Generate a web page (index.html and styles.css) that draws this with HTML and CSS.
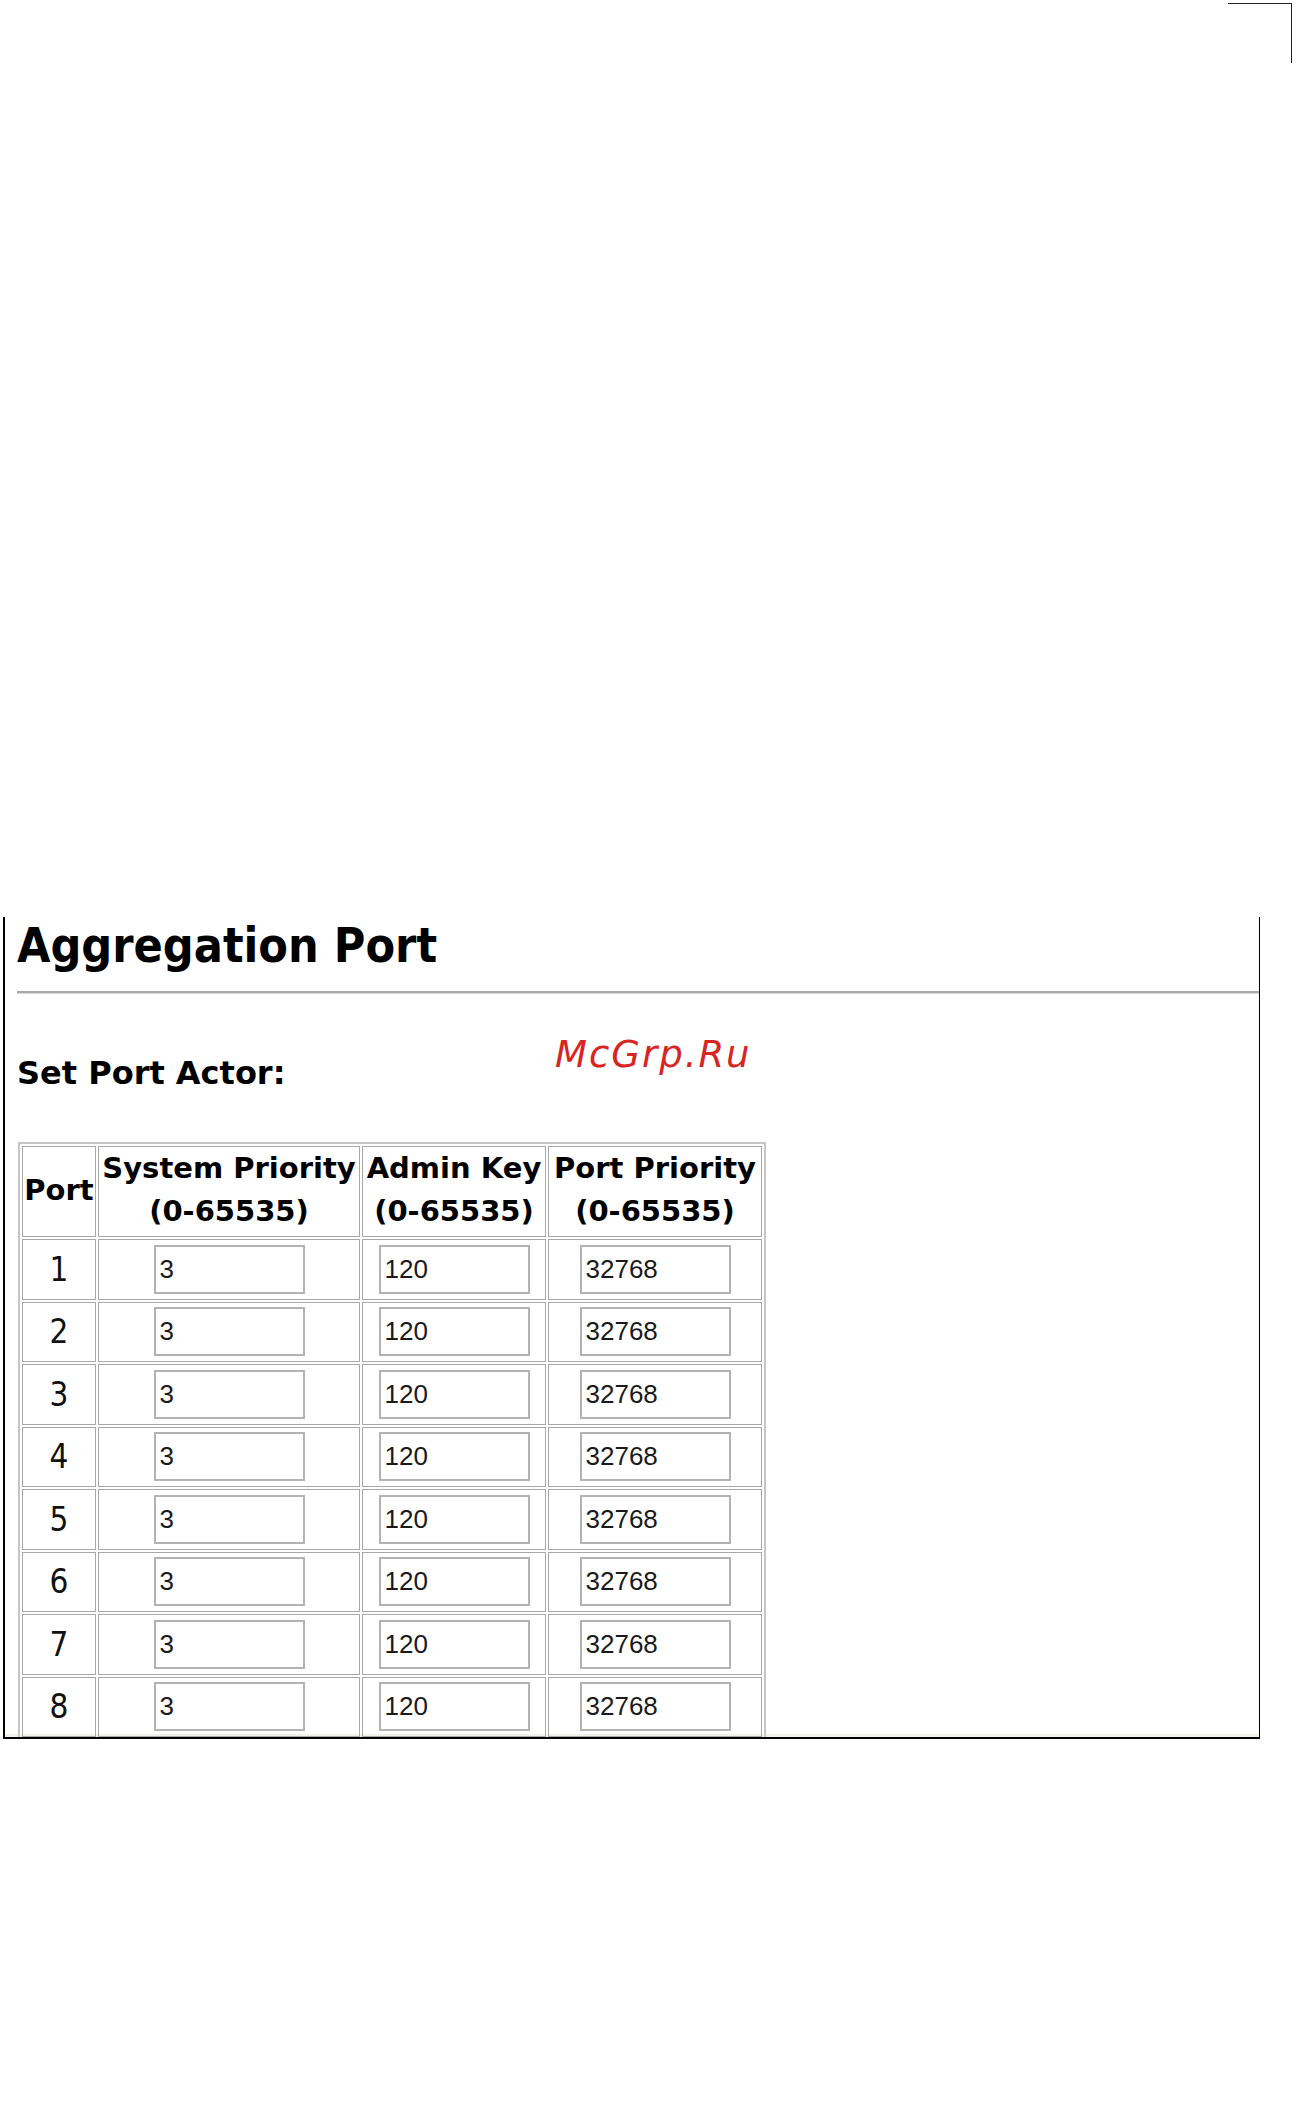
FILE: index.html
```html
<!DOCTYPE html>
<html>
<head>
<meta charset="utf-8">
<title>Aggregation Port</title>
<link rel="stylesheet" href="styles.css">
</head>
<body>
<div class="page">
  <div class="crop-row"><div class="crop-mark"></div></div>
  <div class="frame">
    <h1 class="title">Aggregation Port</h1>
    <div class="rule"></div>
    <h2 class="subtitle">Set Port Actor:</h2>
    <div class="watermark">McGrp.Ru</div>
    <table class="actor">
      <thead>
        <tr>
          <th class="c-port">Port</th>
          <th class="c-sys">System Priority<br>(0-65535)</th>
          <th class="c-key">Admin Key<br>(0-65535)</th>
          <th class="c-pp">Port Priority<br>(0-65535)</th>
        </tr>
      </thead>
      <tbody>
        <tr><td class="num">1</td><td><input class="field" type="text" value="3"></td><td><input class="field" type="text" value="120"></td><td><input class="field" type="text" value="32768"></td></tr>
        <tr><td class="num">2</td><td><input class="field" type="text" value="3"></td><td><input class="field" type="text" value="120"></td><td><input class="field" type="text" value="32768"></td></tr>
        <tr><td class="num">3</td><td><input class="field" type="text" value="3"></td><td><input class="field" type="text" value="120"></td><td><input class="field" type="text" value="32768"></td></tr>
        <tr><td class="num">4</td><td><input class="field" type="text" value="3"></td><td><input class="field" type="text" value="120"></td><td><input class="field" type="text" value="32768"></td></tr>
        <tr><td class="num">5</td><td><input class="field" type="text" value="3"></td><td><input class="field" type="text" value="120"></td><td><input class="field" type="text" value="32768"></td></tr>
        <tr><td class="num">6</td><td><input class="field" type="text" value="3"></td><td><input class="field" type="text" value="120"></td><td><input class="field" type="text" value="32768"></td></tr>
        <tr><td class="num">7</td><td><input class="field" type="text" value="3"></td><td><input class="field" type="text" value="120"></td><td><input class="field" type="text" value="32768"></td></tr>
        <tr><td class="num">8</td><td><input class="field" type="text" value="3"></td><td><input class="field" type="text" value="120"></td><td><input class="field" type="text" value="32768"></td></tr>
      </tbody>
    </table>
  </div>
</div>
</body>
</html>
```
FILE: styles.css
```css
html, body {
  margin: 0;
  padding: 0;
  background: #ffffff;
}

body {
  font-family: "DejaVu Sans", Verdana, sans-serif;
  color: #000;
}

.page {
  width: 1296px;
  height: 2107px;
}

.crop-row {
  display: flex;
  justify-content: flex-end;
  padding: 3px 4px 0 0;
}

.crop-mark {
  width: 64px;
  height: 60px;
  box-sizing: border-box;
  border-top: 1px solid #222;
  border-right: 1px solid #222;
}

.frame {
  position: relative;
  margin: 854px 0 0 3px;
  width: 1257px;
  height: 822px;
  box-sizing: border-box;
  border-left: 2px solid #000;
  border-right: 1px solid #000;
  border-bottom: 2px solid #000;
  padding-left: 12px;
  overflow: hidden;
  box-shadow: inset 0 -3px 0 #f2f1e9;
}

.title {
  margin: 0;
  font-family: "DejaVu Sans Condensed", "DejaVu Sans", sans-serif;
  font-stretch: condensed;
  font-weight: bold;
  font-size: 48px;
  line-height: 57px;
  color: #000;
}

.rule {
  margin-top: 17px;
  height: 0;
  border-top: 2px solid #a9a9a9;
  border-bottom: 1px solid #d9d9d9;
}

.subtitle {
  margin: 59px 0 0 0;
  font-family: "DejaVu Sans", sans-serif;
  font-weight: bold;
  font-size: 32px;
  line-height: 40px;
  color: #000;
}

.watermark {
  position: absolute;
  left: 550px;
  top: 116px;
  font-family: "DejaVu Sans", sans-serif;
  font-style: italic;
  font-size: 37px;
  line-height: 44px;
  letter-spacing: 2px;
  color: #d92424;
}

.actor {
  margin: 49px 0 0 1px;
  width: 748px;
  box-sizing: border-box;
  table-layout: fixed;
  border-collapse: separate;
  border-spacing: 2px;
  border: 2px solid #c6c6c6;
}

.actor th,
.actor td {
  box-sizing: border-box;
  border: 1px solid #a8a8a8;
  padding: 0;
  text-align: center;
  vertical-align: middle;
}

.actor th {
  height: 90px;
  padding-bottom: 3px;
  font-family: "DejaVu Sans", sans-serif;
  font-weight: bold;
  font-size: 29px;
  line-height: 43px;
  color: #000;
  white-space: nowrap;
}

.c-port { width: 74px; }
.c-sys { width: 262px; }
.c-key { width: 184px; }
.c-pp { width: 214px; }

.actor td {
  height: 60.5px;
}

.num {
  font-family: "DejaVu Sans Condensed", "DejaVu Sans", sans-serif;
  font-stretch: condensed;
  font-size: 33px;
  color: #111;
}

.field {
  display: block;
  margin: 0 auto;
  width: 151px;
  height: 49px;
  box-sizing: border-box;
  border: 2px solid #b3b3b3;
  padding: 0 4px;
  background: #fff;
  font-family: "Liberation Sans", Arial, sans-serif;
  font-size: 26px;
  color: #1a1a1a;
  outline: none;
}
```
